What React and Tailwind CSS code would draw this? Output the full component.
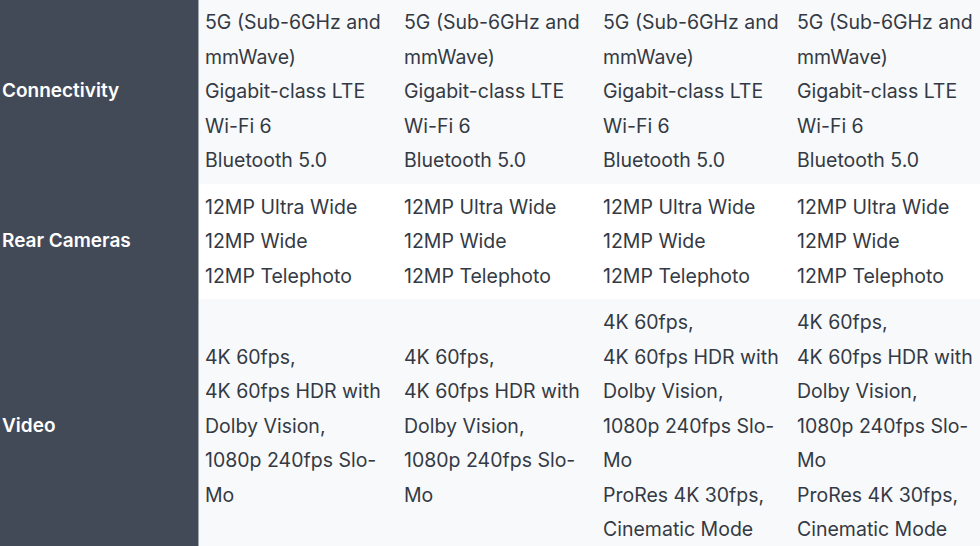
import React from "react";

const rows = [
  {
    label: "Connectivity",
    bg: "bg-[#f8f9fa]",
    cells: [
      ["5G (Sub-6GHz and mmWave)", "Gigabit-class LTE", "Wi-Fi 6", "Bluetooth 5.0"],
      ["5G (Sub-6GHz and mmWave)", "Gigabit-class LTE", "Wi-Fi 6", "Bluetooth 5.0"],
      ["5G (Sub-6GHz and mmWave)", "Gigabit-class LTE", "Wi-Fi 6", "Bluetooth 5.0"],
      ["5G (Sub-6GHz and mmWave)", "Gigabit-class LTE", "Wi-Fi 6", "Bluetooth 5.0"],
    ],
  },
  {
    label: "Rear Cameras",
    bg: "bg-white",
    cells: [
      ["12MP Ultra Wide", "12MP Wide", "12MP Telephoto"],
      ["12MP Ultra Wide", "12MP Wide", "12MP Telephoto"],
      ["12MP Ultra Wide", "12MP Wide", "12MP Telephoto"],
      ["12MP Ultra Wide", "12MP Wide", "12MP Telephoto"],
    ],
  },
  {
    label: "Video",
    bg: "bg-[#f8f9fa]",
    cells: [
      ["4K 60fps,", "4K 60fps HDR with Dolby Vision,", "1080p 240fps Slo-Mo"],
      ["4K 60fps,", "4K 60fps HDR with Dolby Vision,", "1080p 240fps Slo-Mo"],
      ["4K 60fps,", "4K 60fps HDR with Dolby Vision,", "1080p 240fps Slo-Mo", "ProRes 4K 30fps,", "Cinematic Mode"],
      ["4K 60fps,", "4K 60fps HDR with Dolby Vision,", "1080p 240fps Slo-Mo", "ProRes 4K 30fps,", "Cinematic Mode"],
    ],
  },
];

const widths = ["w-[199px]", "w-[199px]", "w-[194px]", "w-[194px]"];

export default function App() {
  return (
    <div
      className="w-[980px] h-[546px] overflow-hidden bg-white"
      style={{ fontFamily: "Inter, 'Noto Sans', sans-serif" }}
    >
      <div className="-mt-px flex flex-col w-max">
        {rows.map((row) => (
          <div key={row.label} className={`flex ${row.bg}`}>
            <div className="w-[199px] shrink-0 flex items-center pl-[2px] bg-[#434a57] border-r border-[#a3a8b0] text-white font-semibold text-[19px]">
              {row.label}
            </div>
            {row.cells.map((lines, i) => (
              <div
                key={i}
                className={`${widths[i]} shrink-0 flex flex-col justify-center px-[6px] py-[6px] text-[19.5px] leading-[34.5px] text-[#343a44]`}
              >
                {lines.map((l, j) => (
                  <div key={j}>{l}</div>
                ))}
              </div>
            ))}
          </div>
        ))}
      </div>
    </div>
  );
}
